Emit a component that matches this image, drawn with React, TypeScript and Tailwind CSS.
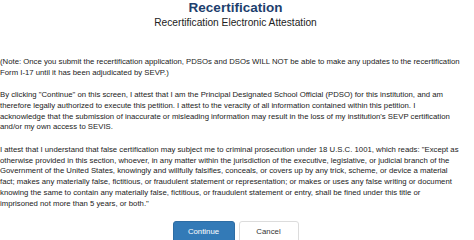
const note = [
  '(Note: Once you submit the recertification application, PDSOs and DSOs WILL NOT be able to make any updates to the recertification',
  'Form I-17 until it has been adjudicated by SEVP.)',
];

const attest = [
  'By clicking "Continue" on this screen, I attest that I am the Principal Designated School Official (PDSO) for this institution, and am',
  'therefore legally authorized to execute this petition. I attest to the veracity of all information contained within this petition. I',
  "acknowledge that the submission of inaccurate or misleading information may result in the loss of my institution's SEVP certification",
  'and/or my own access to SEVIS.',
];

const law = [
  'I attest that I understand that false certification may subject me to criminal prosecution under 18 U.S.C. 1001, which reads: "Except as',
  'otherwise provided in this section, whoever, in any matter within the jurisdiction of the executive, legislative, or judicial branch of the',
  'Government of the United States, knowingly and willfully falsifies, conceals, or covers up by any trick, scheme, or device a material',
  'fact; makes any materially false, fictitious, or fraudulent statement or representation; or makes or uses any false writing or document',
  'knowing the same to contain any materially false, fictitious, or fraudulent statement or entry, shall be fined under this title or',
  'imprisoned not more than 5 years, or both."',
];

function Para({ lines, className = '' }: { lines: string[]; className?: string }) {
  return (
    <p className={className}>
      {lines.map((l) => (
        <span key={l} className="block whitespace-nowrap">
          {l}
        </span>
      ))}
    </p>
  );
}

export default function App() {
  return (
    <div className="w-[474px] h-[240px] overflow-hidden bg-white font-['Liberation_Sans',Arial,sans-serif] text-[#222]">
      <div className="w-[471px]">
        <div className="flex flex-col items-center pt-[1px]">
          <h1 className="text-[13.5px] font-bold leading-[14px] text-[#1d3f6e]">Recertification</h1>
          <h2 className="mt-[2px] text-[10.2px] leading-[12px] text-[#222]">Recertification Electronic Attestation</h2>
        </div>

        <div className="mt-[28px] text-[7.75px] leading-[10.8px]">
          <Para lines={note} />
          <Para lines={attest} className="mt-[11.5px]" />
          <Para lines={law} className="mt-[11.5px]" />
        </div>

        <div className="mt-[11.5px] flex justify-center gap-[4px]">
          <button type="button" className="h-[24px] w-[62px] rounded-[3px] border border-[#2e6da4] bg-[#337ab7] pb-[3px] text-[7.8px] text-white">
            Continue
          </button>
          <button type="button" className="h-[24px] w-[60px] rounded-[3px] border border-[#dcdcdc] bg-white pb-[3px] text-[7.8px] text-[#333]">
            Cancel
          </button>
        </div>
      </div>
    </div>
  );
}
